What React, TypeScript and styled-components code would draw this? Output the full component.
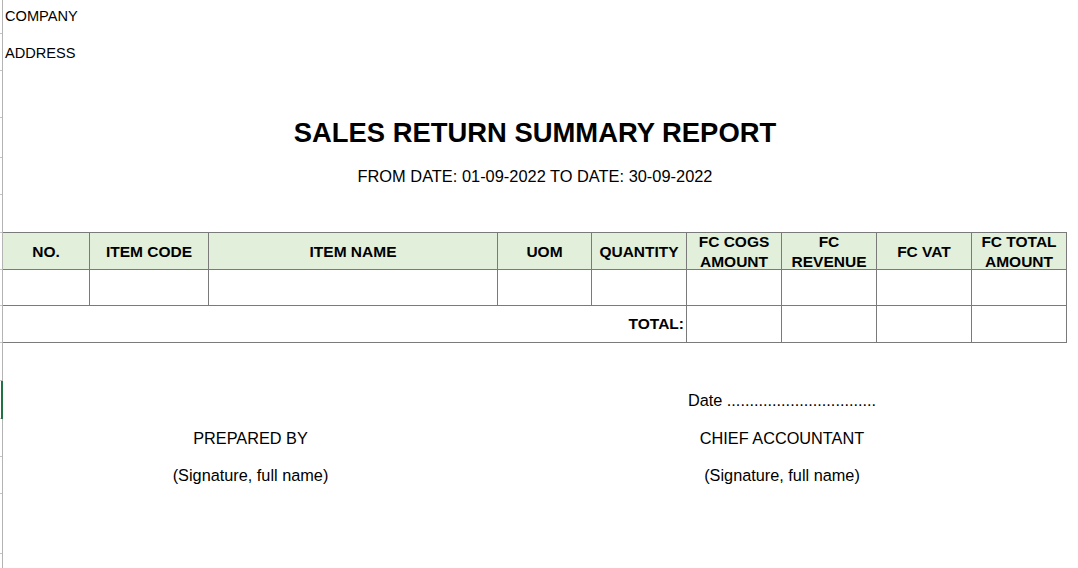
import React from "react";
import styled, { createGlobalStyle } from "styled-components";

const GlobalStyle = createGlobalStyle`
  html, body { margin: 0; padding: 0; background: #ffffff; }
  body { font-family: "Liberation Sans", Arial, sans-serif; color: #000; }
  * { box-sizing: border-box; }
`;

const COLS = "87px 119px 289px 94px repeat(5, 95px)";

const Page = styled.div`
  display: flex;
  width: 1078px;
  height: 568px;
  overflow: hidden;
  background: #fff;
`;

const Gutter = styled.div`
  width: 3px;
  flex: none;
  display: flex;
  flex-direction: column;
  border-right: 1px solid #b4b4b4;
`;

const Tick = styled.div<{ $h: number; $sel?: boolean }>`
  position: relative;
  height: ${(p) => p.$h}px;
  flex: none;
  border-bottom: 1px solid #c4c4c4;
  &::after {
    content: "";
    display: ${(p) => (p.$sel ? "block" : "none")};
    position: absolute;
    top: 0;
    bottom: -1px;
    right: -1px;
    width: 2px;
    background: #217346;
  }
`;

const Sheet = styled.div`
  width: 1064px;
  flex: none;
  display: flex;
  flex-direction: column;
`;

const Row = styled.div<{ $h: number; $pb?: number; $center?: boolean }>`
  height: ${(p) => p.$h}px;
  flex: none;
  display: flex;
  align-items: center;
  justify-content: ${(p) => (p.$center ? "center" : "flex-start")};
  padding-bottom: ${(p) => p.$pb ?? 0}px;
`;

const InfoText = styled.span`
  padding-left: 2px;
  font-size: 14.6px;
  line-height: 16px;
`;

const Title = styled.h1`
  margin: 0;
  font-size: 27.4px;
  line-height: 30px;
  font-weight: 700;
`;

const Period = styled.div`
  font-size: 16.4px;
  line-height: 18px;
`;

const Table = styled.div`
  display: grid;
  grid-template-columns: ${COLS};
  grid-auto-rows: auto;
  border-top: 1px solid #7a7a7a;
  flex: none;
`;

const Cell = styled.div<{
  $h: number;
  $head?: boolean;
  $span?: number;
  $right?: boolean;
}>`
  height: ${(p) => p.$h}px;
  grid-column: span ${(p) => p.$span ?? 1};
  border-right: 1px solid #7a7a7a;
  border-bottom: 1px solid #7a7a7a;
  background: ${(p) => (p.$head ? "#e2efda" : "#ffffff")};
  display: flex;
  align-items: center;
  justify-content: ${(p) => (p.$right ? "flex-end" : "center")};
  text-align: center;
  padding: ${(p) => (p.$head ? "2px 0 0 0" : "0 2px 0 0")};
  font-size: 15.5px;
  line-height: 20px;
  font-weight: 700;
  white-space: pre-line;
  overflow: visible;
`;

const SignGrid = styled.div`
  display: grid;
  grid-template-columns: ${COLS};
  grid-template-rows: 38px 38px 38px 36px;
  flex: none;
`;

const SignCell = styled.div<{ $col: string; $row: number }>`
  grid-column: ${(p) => p.$col};
  grid-row: ${(p) => p.$row};
  display: flex;
  align-items: center;
  justify-content: center;
  font-size: 16.3px;
  line-height: 18px;
  white-space: nowrap;
`;

const ticks: { h: number; sel?: boolean }[] = [
  { h: 34 },
  { h: 37 },
  { h: 47 },
  { h: 40 },
  { h: 37 },
  { h: 38 },
  { h: 37 },
  { h: 36 },
  { h: 37 },
  { h: 38 },
  { h: 38, sel: true },
  { h: 38 },
  { h: 37 },
  { h: 60 },
];

const headers = [
  "NO.",
  "ITEM CODE",
  "ITEM NAME",
  "UOM",
  "QUANTITY",
  "FC COGS\nAMOUNT",
  "FC\nREVENUE",
  "FC VAT",
  "FC TOTAL\nAMOUNT",
];

export default function App() {
  const dots = ".".repeat(33);
  return (
    <>
      <GlobalStyle />
      <Page>
        <Gutter>
          {ticks.map((t, i) => (
            <Tick key={i} $h={t.h} $sel={t.sel} />
          ))}
        </Gutter>
        <Sheet>
          <Row $h={34} $pb={3}>
            <InfoText>COMPANY</InfoText>
          </Row>
          <Row $h={37}>
            <InfoText>ADDRESS</InfoText>
          </Row>
          <Row $h={47} />
          <Row $h={40} $pb={11} $center>
            <Title>SALES RETURN SUMMARY REPORT</Title>
          </Row>
          <Row $h={37} $pb={2} $center>
            <Period>FROM DATE: 01-09-2022 TO DATE: 30-09-2022</Period>
          </Row>
          <Row $h={37} />
          <Table>
            {headers.map((h) => (
              <Cell key={h} $h={37} $head>
                {h}
              </Cell>
            ))}
            {headers.map((h) => (
              <Cell key={"r-" + h} $h={36} />
            ))}
            <Cell $h={37} $span={5} $right>
              TOTAL:
            </Cell>
            <Cell $h={37} />
            <Cell $h={37} />
            <Cell $h={37} />
            <Cell $h={37} />
          </Table>
          <SignGrid>
            <SignCell $col="6 / 8" $row={2}>
              Date {dots}
            </SignCell>
            <SignCell $col="1 / 4" $row={3}>
              PREPARED BY
            </SignCell>
            <SignCell $col="6 / 8" $row={3}>
              CHIEF ACCOUNTANT
            </SignCell>
            <SignCell $col="1 / 4" $row={4}>
              (Signature, full name)
            </SignCell>
            <SignCell $col="6 / 8" $row={4}>
              (Signature, full name)
            </SignCell>
          </SignGrid>
        </Sheet>
      </Page>
    </>
  );
}
